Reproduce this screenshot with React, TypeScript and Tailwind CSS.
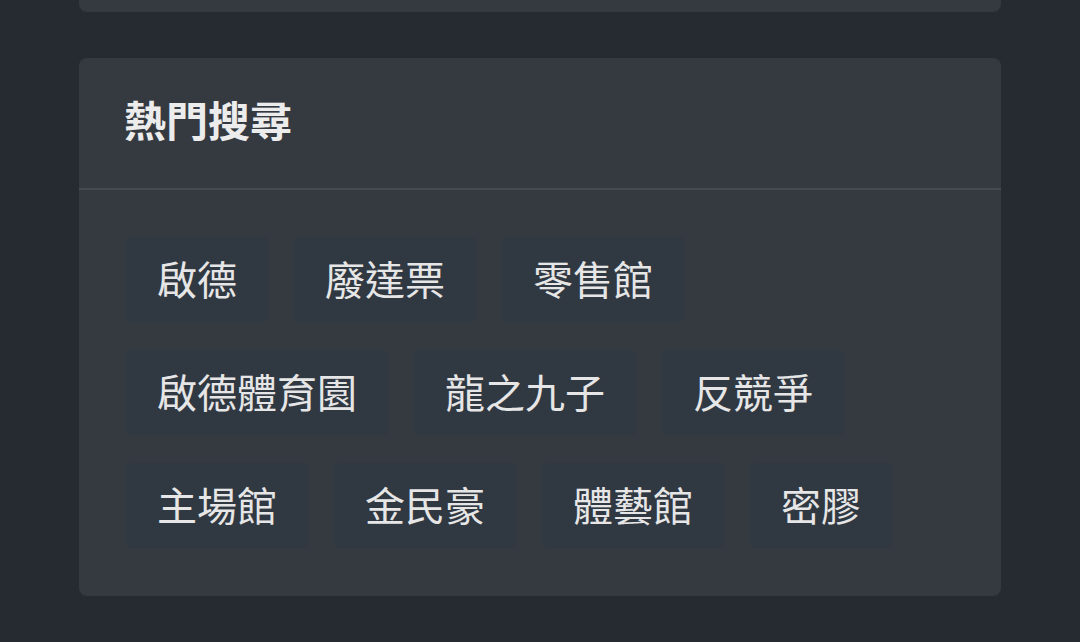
const tagRows = [
  ["啟德", "廢達票", "零售館"],
  ["啟德體育園", "龍之九子", "反競爭"],
  ["主場館", "金民豪", "體藝館", "密膠"],
];

const font = {
  fontFamily: '"Noto Sans CJK TC", "Noto Sans", sans-serif',
};

export default function App() {
  return (
    <div
      className="flex h-[642px] w-[1080px] flex-col overflow-hidden bg-[#262a31] px-[79px]"
      style={font}
    >
      <div className="-mt-[20px] h-[32px] shrink-0 rounded-b-[8px] bg-[#353940]" />

      <section className="mt-[46px] w-[922px] rounded-[8px] bg-[#353940]">
        <div className="flex h-[132px] items-center border-b-2 border-[#454a51] px-[45px] pb-[9px]">
          <h2 className="text-[42px] font-bold leading-none text-[#ececec]">熱門搜尋</h2>
        </div>

        <div className="flex flex-col gap-[28px] px-[47px] pt-[47px] pb-[48px]">
          {tagRows.map((row, i) => (
            <div key={i} className="flex gap-[26px]">
              {row.map((tag) => (
                <span
                  key={tag}
                  className="flex h-[85px] items-center rounded-[6px] bg-[#303842] px-[31px] pb-[4px] text-[40px] leading-none text-[#e6e6e6]"
                >
                  {tag}
                </span>
              ))}
            </div>
          ))}
        </div>
      </section>
    </div>
  );
}
